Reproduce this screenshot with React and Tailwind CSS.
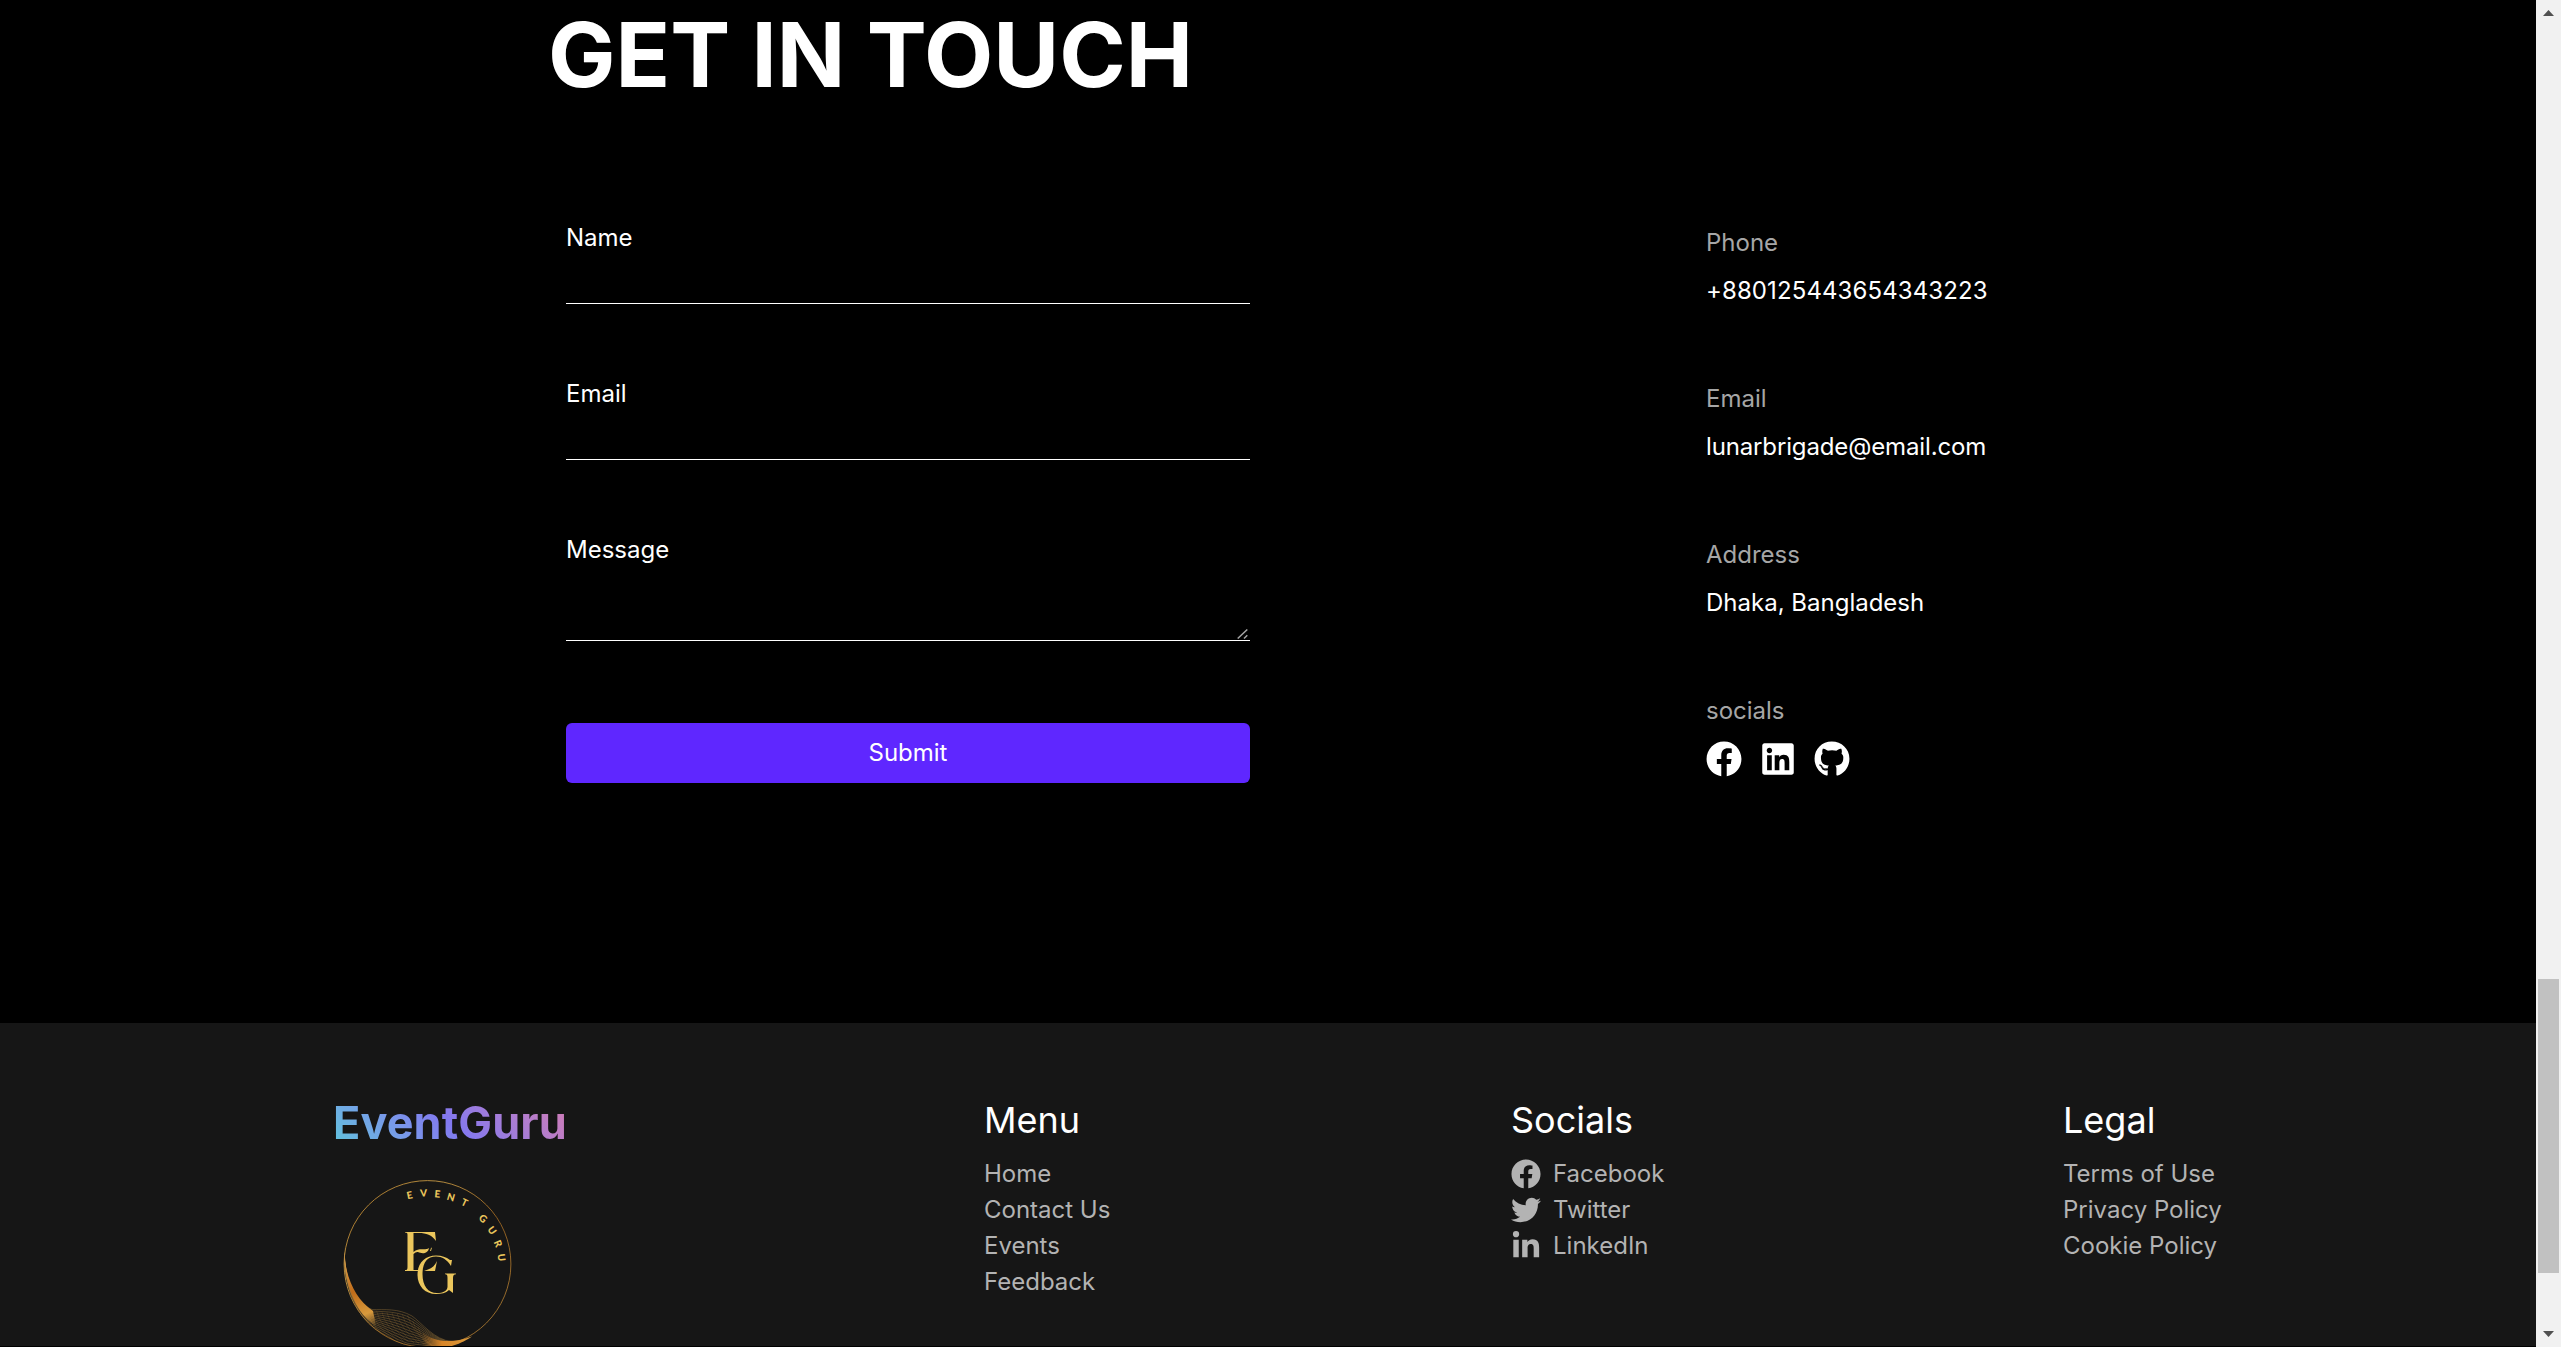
import React from "react";
import { FaFacebook, FaGithub, FaLinkedin, FaLinkedinIn, FaTwitter } from "react-icons/fa";

const strands = [0, 1, 2, 3, 4, 5, 6, 7, 8, 9, 10, 11, 12];

function Waves() {
  return strands.map((i) => {
    const t = i / 12;
    return (
      <path
        key={i}
        d={`M24.3 ${92 + t * 10} C${25 + t * 2} ${122 + t * 8} ${36 - t * 2} ${143 + t * 5} ${52 - t * 1} ${149.5 + t * 18} C${64 + t * 2} ${150 + t * 24} ${78 - t * 4} ${148 + t * 34} ${92 - t * 4} ${156 + t * 30} C${102 + t * 2} ${163 + t * 24} ${114 + t * 3} ${180 + t * 8} ${132} ${181.5 + t * 5} C138 ${182 + t * 4} 145 ${180 + t * 2} 152 177`}
        stroke="#b58a42"
        strokeWidth="0.5"
        strokeOpacity="0.75"
      />
    );
  });
}

function CrossWaves() {
  return strands.map((i) => {
    const x = 46 + i * 5.2;
    const y = i < 8 ? 149 + i * 0.8 : 155 + (i - 8) * 6;
    return <path key={i} d={`M${x} ${y} Q${x + 4} ${y + 16} ${x + 22} ${Math.min(y + 30, 188)}`} stroke="#a67a36" strokeWidth="0.4" strokeOpacity="0.55" />;
  });
}

function Logo() {
  return (
    <svg className="block h-[187px] w-[220px]" viewBox="0 0 220 187" fill="none">
      <defs>
        <linearGradient id="ringGold" x1="20" y1="20" x2="190" y2="180" gradientUnits="userSpaceOnUse">
          <stop offset="0" stopColor="#a8701f" />
          <stop offset="0.3" stopColor="#c79a45" />
          <stop offset="0.6" stopColor="#9a6420" />
          <stop offset="1" stopColor="#a87b35" />
        </linearGradient>
        <linearGradient id="edgeGold" x1="24" y1="90" x2="56" y2="168" gradientUnits="userSpaceOnUse">
          <stop offset="0" stopColor="#e8b35a" />
          <stop offset="0.5" stopColor="#c06c1a" />
          <stop offset="0.8" stopColor="#d99a3c" />
          <stop offset="1" stopColor="#d99a3c" stopOpacity="0" />
        </linearGradient>
        <linearGradient id="tailGold" x1="102" y1="0" x2="152" y2="0" gradientUnits="userSpaceOnUse">
          <stop offset="0" stopColor="#d98628" stopOpacity="0" />
          <stop offset="0.4" stopColor="#d98628" />
          <stop offset="1" stopColor="#d99a3c" />
        </linearGradient>
        <clipPath id="ringClip"><circle cx="107.5" cy="104" r="84" /></clipPath>
      </defs>
      <circle cx="107.5" cy="104" r="83.400" stroke="url(#ringGold)" strokeWidth="0.9" />
      <g clipPath="url(#ringClip)">
        <Waves />
        <CrossWaves />
      </g>
      <path d="M24 86 C24 114 34 138 53 151 L56 166 C36 154 24 126 24 86Z" fill="url(#edgeGold)" />
      <path d="M102 172 C114 182 130 184 152 176.500 C142 183 136 185 128 187 H100Z" fill="url(#tailGold)" />
      <g fill="#ebc65c" fontFamily="Lato, sans-serif" fontWeight="900" fontSize="10" textAnchor="middle">
        {[
          ["E", 89.5, 35, -12], ["V", 103.5, 33, -3], ["E", 117.5, 33.8, 5], ["N", 131, 37, 16],
          ["T", 144.5, 42.5, 25], ["G", 163, 58.5, 42], ["U", 172, 70.5, 54], ["R", 178, 83.5, 67], ["U", 181.5, 97.5, 82],
        ].map(([c, x, y, r], i) => (
          <text key={i} transform={`translate(${x} ${y}) rotate(${r})`} y="3.6">{c}</text>
        ))}
      </g>
      <g fill="#ebc65c">
        <path d="M85 72 H115 L116 81 C112 75 106 73 99 73 H93.500 V92 C99 87 105 91 109 88 C108 94 102 94 98 92 Q96 91.500 93.500 94 V110 H101 V111 H85 V110 C87 110 87.500 109.500 87.500 107 V75 C87.500 73 87 72.700 85 72.500Z" />
        <path d="M110 91 L111 88 L112 87.500 L111 91Z M108 109.500 C112 108.500 115 105 117 101 L115 111 H104Z" />
        <path d="M131 106 C127 99.500 122 96.500 116 96.500 C107 96.500 102.500 103 102.500 114 C102.500 126 108 133 117 133 C123 133 127 131 127.500 127 V118 C127.500 115 127 114.500 125 114.300 V113.500 H136 V114.300 C134 114.500 133 115 133 118 V133 L129 130 C126 133 121 134 116 134 C105 134 97.500 126 97.500 115 C97.500 103 105 95.500 116 95.500 C122 95.500 126 97 130 100 L132 100Z" />
      </g>
    </svg>
  );
}

function Field({ label, children }) {
  return (
    <label className="block pt-px">
      <span className="block leading-9">{label}</span>
      {children}
    </label>
  );
}

function Info({ label, children }) {
  return (
    <div className="h-[156px]">
      <p className="leading-9 text-[#a6a6a6]">{label}</p>
      <div className="mt-3 leading-9">{children}</div>
    </div>
  );
}

function Column({ title, className, children }) {
  return (
    <div className={className}>
      <h2 className="mb-3 text-[36px] leading-[48px] text-white">{title}</h2>
      <ul className="leading-9 text-[#b3b3b3]">{children}</ul>
    </div>
  );
}

export default function App() {
  return (
    <div className="flex h-[1347px] w-[2561px] overflow-hidden bg-black font-['Inter',sans-serif] text-[24px] text-white">
      <div className="flex w-[2536px] flex-col">
        <main className="h-[1023px] shrink-0 pl-[548px]">
          <h1 className="h-[219px] text-[90px] leading-[109px] font-bold">GET IN TOUCH</h1>
          <div className="flex">
            <form className="ml-[18px] w-[684px]">
              <div className="h-[156px]">
                <Field label="Name">
                  <input className="block h-[48px] w-full border-b border-white bg-transparent outline-none" />
                </Field>
              </div>
              <div className="h-[156px]">
                <Field label="Email">
                  <input className="block h-[48px] w-full border-b border-white bg-transparent outline-none" />
                </Field>
              </div>
              <div className="relative h-[192px]">
                <Field label="Message">
                  <textarea className="block h-[73px] w-full resize-none border-b border-white bg-transparent outline-none" />
                </Field>
                <svg className="absolute top-[98px] right-[2px] h-[10px] w-[11px]" viewBox="0 0 11 10" fill="none" stroke="#a3a3a3" strokeWidth="1.5">
                  <path d="M0.700 9.500 L10.300 0.500 M7 9.500 L10.300 6.300" />
                </svg>
              </div>
              <button type="button" className="block h-[60px] w-full rounded-md bg-[#5f27ff]">Submit</button>
            </form>
            <section className="ml-[456px] pt-[6px]">
              <Info label="Phone"><span className="tracking-[0.1px]">+880125443654343223</span></Info>
              <Info label="Email"><span className="tracking-[-0.14px]">lunarbrigade@email.com</span></Info>
              <Info label="Address">Dhaka, Bangladesh</Info>
              <Info label="socials">
                <div className="flex gap-[18px] text-[36px]">
                  <FaFacebook />
                  <FaLinkedin />
                  <FaGithub />
                </div>
              </Info>
            </section>
          </div>
        </main>
        <footer className="flex h-[323px] shrink-0 overflow-hidden bg-[#161616] pt-[73px]">
          <div className="ml-[320px] w-[664px]">
            <p className="ml-[13px] w-fit bg-linear-45 from-[#5cc6dc] via-[#8278f0] to-[#d77bb0] bg-clip-text text-[45px] leading-[54px] font-bold tracking-[0.1px] text-transparent">EventGuru</p>
            <div className="mt-[10px]"><Logo /></div>
          </div>
          <Column title="Menu" className="w-[527px]">
            <li>Home</li>
            <li>Contact Us</li>
            <li>Events</li>
            <li>Feedback</li>
          </Column>
          <Column title="Socials" className="w-[552px]">
            <li className="flex items-center gap-3"><FaFacebook className="size-[30px]" />Facebook</li>
            <li className="flex items-center gap-3"><FaTwitter className="size-[30px]" />Twitter</li>
            <li className="flex items-center gap-3"><FaLinkedinIn className="size-[30px]" />LinkedIn</li>
          </Column>
          <Column title="Legal">
            <li>Terms of Use</li>
            <li>Privacy Policy</li>
            <li>Cookie Policy</li>
          </Column>
        </footer>
      </div>
      <div className="flex w-[25px] flex-col items-center bg-[#f1f1f1] pt-[10px] pb-[10px]">
        <svg className="h-[6px] w-[11px]" viewBox="0 0 11 6"><path d="M0 6 L5.500 0 L11 6Z" fill="#505050" /></svg>
        <div className="mt-[963px] h-[294px] w-[21px] bg-[#c1c1c1]" />
        <svg className="mt-auto h-[6px] w-[11px]" viewBox="0 0 11 6"><path d="M0 0 L5.500 6 L11 0Z" fill="#505050" /></svg>
      </div>
    </div>
  );
}
